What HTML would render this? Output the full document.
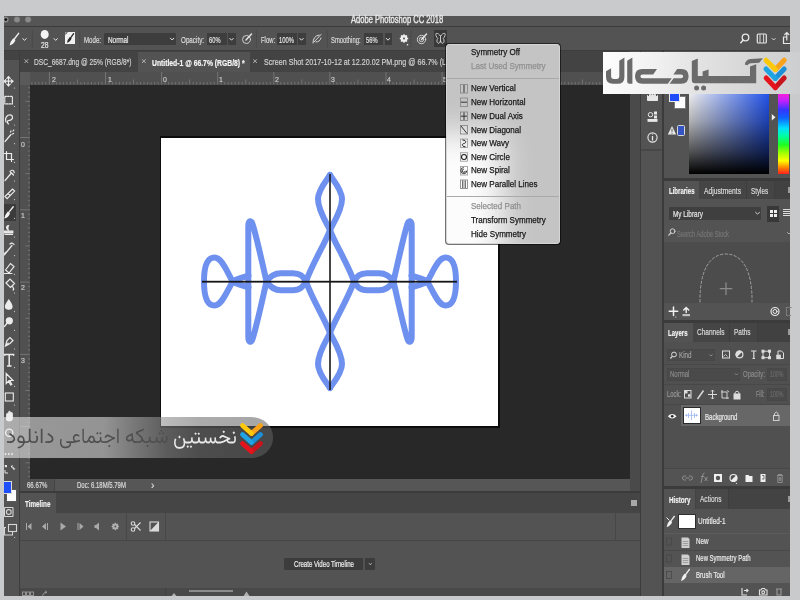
<!DOCTYPE html>
<html><head><meta charset="utf-8">
<style>
*{margin:0;padding:0;box-sizing:border-box}
html,body{width:800px;height:600px;overflow:hidden;background:#c9cacc;font-family:"Liberation Sans",sans-serif}
.a{position:absolute}
.t{position:absolute;white-space:nowrap;line-height:1;transform-origin:0 0}
svg{position:absolute;left:0;top:0;overflow:visible}
</style></head><body>
<!-- app frame -->
<div class="a" style="left:4px;top:16px;width:786px;height:580px;background:#535353"></div>
<!-- title bar -->
<div class="a" style="left:4px;top:16px;width:786px;height:10px;background:#555555"></div>
<div class="a" style="left:4px;top:26px;width:786px;height:1px;background:#3b3b3b"></div>
<svg width="40" height="14" style="left:4px;top:13px;overflow:hidden" viewBox="4 13 40 14">
<circle cx="5.6" cy="19.6" r="3.3" fill="#8c8c8c" stroke="#4a4a4a" stroke-width="0.5"/><circle cx="5.8" cy="19.6" r="1.4" fill="#111"/>
<circle cx="17" cy="19.6" r="3.3" fill="#8a8a8a" stroke="#4a4a4a" stroke-width="0.5"/>
<circle cx="28.1" cy="19.6" r="3.3" fill="#8a8a8a" stroke="#4a4a4a" stroke-width="0.5"/>
</svg>
<!-- options bar -->
<div class="a" style="left:4px;top:27px;width:786px;height:24px;background:#535353"></div>
<div class="a" style="left:4px;top:50px;width:786px;height:1px;background:#3d3d3d"></div>
<!-- tab bar -->
<div class="a" style="left:4px;top:51px;width:626px;height:20.5px;background:#434343"></div>
<div class="a" style="left:138px;top:52px;width:112px;height:19.5px;background:#535353"></div>
<!-- toolbar -->
<div class="a" style="left:4px;top:60px;width:15px;height:536px;background:#535353"></div>
<div class="a" style="left:4px;top:204px;width:12px;height:16.5px;background:#3b3b3b"></div>
<div class="a" style="left:19px;top:51px;width:1px;height:545px;background:#3d3d3d"></div>
<!-- rulers -->
<div class="a" style="left:20px;top:71.5px;width:610px;height:13.5px;background:#505050"></div>
<div class="a" style="left:20px;top:71.5px;width:10px;height:407.5px;background:#505050"></div>
<svg width="800" height="600"><path d="M31.87 82V84.5M35.37 82V84.5M38.88 82V84.5M42.39 82V84.5M45.89 82V84.5M49.40 72V84.5M52.91 82V84.5M56.41 82V84.5M59.92 82V84.5M63.42 82V84.5M66.93 82V84.5M70.44 82V84.5M73.94 82V84.5M77.45 79.5V84.5M80.96 82V84.5M84.46 82V84.5M87.97 82V84.5M91.47 82V84.5M94.98 82V84.5M98.49 82V84.5M101.99 82V84.5M105.50 72V84.5M109.01 82V84.5M112.51 82V84.5M116.02 82V84.5M119.52 82V84.5M123.03 82V84.5M126.54 82V84.5M130.04 82V84.5M133.55 79.5V84.5M137.06 82V84.5M140.56 82V84.5M144.07 82V84.5M147.57 82V84.5M151.08 82V84.5M154.59 82V84.5M158.09 82V84.5M161.60 72V84.5M165.11 82V84.5M168.61 82V84.5M172.12 82V84.5M175.62 82V84.5M179.13 82V84.5M182.64 82V84.5M186.14 82V84.5M189.65 79.5V84.5M193.16 82V84.5M196.66 82V84.5M200.17 82V84.5M203.68 82V84.5M207.18 82V84.5M210.69 82V84.5M214.19 82V84.5M217.70 72V84.5M221.21 82V84.5M224.71 82V84.5M228.22 82V84.5M231.72 82V84.5M235.23 82V84.5M238.74 82V84.5M242.24 82V84.5M245.75 79.5V84.5M249.26 82V84.5M252.76 82V84.5M256.27 82V84.5M259.77 82V84.5M263.28 82V84.5M266.79 82V84.5M270.29 82V84.5M273.80 72V84.5M277.31 82V84.5M280.81 82V84.5M284.32 82V84.5M287.82 82V84.5M291.33 82V84.5M294.84 82V84.5M298.34 82V84.5M301.85 79.5V84.5M305.36 82V84.5M308.86 82V84.5M312.37 82V84.5M315.88 82V84.5M319.38 82V84.5M322.89 82V84.5M326.39 82V84.5M329.90 72V84.5M333.41 82V84.5M336.91 82V84.5M340.42 82V84.5M343.93 82V84.5M347.43 82V84.5M350.94 82V84.5M354.44 82V84.5M357.95 79.5V84.5M361.46 82V84.5M364.96 82V84.5M368.47 82V84.5M371.98 82V84.5M375.48 82V84.5M378.99 82V84.5M382.49 82V84.5M386.00 72V84.5M389.51 82V84.5M393.01 82V84.5M396.52 82V84.5M400.02 82V84.5M403.53 82V84.5M407.04 82V84.5M410.54 82V84.5M414.05 79.5V84.5M417.56 82V84.5M421.06 82V84.5M424.57 82V84.5M428.08 82V84.5M431.58 82V84.5M435.09 82V84.5M438.59 82V84.5M442.10 72V84.5M445.61 82V84.5M449.11 82V84.5M452.62 82V84.5M456.12 82V84.5M459.63 82V84.5M463.14 82V84.5M466.64 82V84.5M470.15 79.5V84.5M473.66 82V84.5M477.16 82V84.5M480.67 82V84.5M484.17 82V84.5M487.68 82V84.5M491.19 82V84.5M494.69 82V84.5M498.20 72V84.5M501.71 82V84.5M505.21 82V84.5M508.72 82V84.5M512.23 82V84.5M515.73 82V84.5M519.24 82V84.5M522.74 82V84.5M526.25 79.5V84.5M529.76 82V84.5M533.26 82V84.5M536.77 82V84.5M540.27 82V84.5M543.78 82V84.5M547.29 82V84.5M550.79 82V84.5M554.30 72V84.5M557.81 82V84.5M561.31 82V84.5M564.82 82V84.5M568.33 82V84.5M571.83 82V84.5M575.34 82V84.5M578.84 82V84.5M582.35 79.5V84.5M585.86 82V84.5M589.36 82V84.5M592.87 82V84.5M596.38 82V84.5M599.88 82V84.5M603.39 82V84.5M606.89 82V84.5M610.40 72V84.5M613.91 82V84.5M617.41 82V84.5M620.92 82V84.5M624.42 82V84.5M627.93 82V84.5" stroke="#7a7a7a" stroke-width="0.85" fill="none"/><path d="M28 87.79H30M28 92.31H30M28 96.83H30M25.5 101.35H30M28 105.87H30M28 110.39H30M28 114.91H30M28 119.42H30M28 123.94H30M28 128.46H30M28 132.98H30M20 137.50H30M28 142.02H30M28 146.54H30M28 151.06H30M28 155.57H30M28 160.09H30M28 164.61H30M28 169.13H30M25.5 173.65H30M28 178.17H30M28 182.69H30M28 187.21H30M28 191.72H30M28 196.24H30M28 200.76H30M28 205.28H30M20 209.80H30M28 214.32H30M28 218.84H30M28 223.36H30M28 227.88H30M28 232.39H30M28 236.91H30M28 241.43H30M25.5 245.95H30M28 250.47H30M28 254.99H30M28 259.51H30M28 264.02H30M28 268.54H30M28 273.06H30M28 277.58H30M20 282.10H30M28 286.62H30M28 291.14H30M28 295.66H30M28 300.17H30M28 304.69H30M28 309.21H30M28 313.73H30M25.5 318.25H30M28 322.77H30M28 327.29H30M28 331.81H30M28 336.32H30M28 340.84H30M28 345.36H30M28 349.88H30M20 354.40H30M28 358.92H30M28 363.44H30M28 367.96H30M28 372.48H30M28 376.99H30M28 381.51H30M28 386.03H30M25.5 390.55H30M28 395.07H30M28 399.59H30M28 404.11H30M28 408.62H30M28 413.14H30M28 417.66H30M28 422.18H30M20 426.70H30M28 431.22H30M28 435.74H30M28 440.26H30M28 444.77H30M28 449.29H30M28 453.81H30M28 458.33H30M25.5 462.85H30M28 467.37H30M28 471.89H30M28 476.41H30" stroke="#7a7a7a" stroke-width="0.85" fill="none"/></svg>
<div class="a" style="left:20px;top:71.5px;width:10px;height:13.5px;background:#5a5a5a"></div>
<!-- pasteboard -->
<div class="a" style="left:30px;top:85px;width:600px;height:394px;background:#282828"></div>
<!-- canvas -->
<div class="a" style="left:159.5px;top:136px;width:340.5px;height:292px;background:#0c0c0c"></div>
<div class="a" style="left:161px;top:137.5px;width:337px;height:288.5px;background:#fff"></div>
<!-- symmetry shape -->
<svg width="800" height="600" viewBox="0 0 800 600">
<g fill="none" stroke="#6e90ef" stroke-width="6" stroke-linejoin="round" stroke-linecap="round">
<g id="half">
<path d="M330 230 C326 242 312 264 306 281.5 C312 299 326 321 330 333"/>
<path d="M330 230 C326 222 318 210 318 199 C318 190 326 181 330 175"/>
<path d="M330 333 C326 341 318 353 318 364 C318 373 326 382 330 388"/>
<path d="M306 281.5 C303 276 300 273.3 293 273.3 L281 273.3 C274 273.3 269.5 277 266.5 281.5 C269.5 286 274 290.2 281 290.2 L293 290.2 C300 290.2 303 287 306 281.5"/>
<path d="M266.5 281.5 C262 262 256 234 252.5 224 C251.5 220 248.3 220 248.3 226 L248.3 337 C248.3 343 251.5 343 252.5 339 C256 329 262 301 266.5 281.5"/>
<path d="M248.5 275.5 C244 277 237 279 232.5 281 C227 272 222 257.5 214.5 257.5 C206.5 257.5 204 269 204 281.5 C204 294 206.5 305.5 214.5 305.5 C222 305.5 227 291 232.5 282 C237 284 244 286 248.5 287.5"/>
</g>
<use href="#half" transform="translate(660 0) scale(-1 1)"/>
</g>
<rect x="202" y="280.8" width="255" height="1.8" fill="#151515"/>
<rect x="329.2" y="174" width="1.6" height="216" fill="#1a1a1a"/>
</svg>
<!-- status bar -->
<div class="a" style="left:20px;top:479px;width:620px;height:12px;background:#505050"></div>
<div class="a" style="left:54px;top:479px;width:576px;height:12px;background:#565656"></div>
<div class="a" style="left:53.5px;top:479px;width:1px;height:12px;background:#444"></div>
<div class="a" style="left:20px;top:491px;width:620px;height:1.5px;background:#3b3b3b"></div>
<!-- scroll strip -->
<div class="a" style="left:630px;top:71.5px;width:10px;height:419.5px;background:#4a4a4a"></div>
<div class="a" style="left:640px;top:51px;width:1px;height:545px;background:#3b3b3b"></div>
<!-- icon column -->
<div class="a" style="left:641px;top:51px;width:21px;height:545px;background:#535353"></div>
<div class="a" style="left:641px;top:149px;width:21px;height:2px;background:#474747"></div>
<div class="a" style="left:662px;top:51px;width:2px;height:545px;background:#3b3b3b"></div>
<!-- timeline panel -->
<div class="a" style="left:20px;top:492.5px;width:620px;height:103.5px;background:#535353"></div>
<div class="a" style="left:20px;top:492.5px;width:620px;height:20.5px;background:#454545"></div>
<div class="a" style="left:20px;top:493px;width:36px;height:20px;background:#535353"></div>
<div class="a" style="left:20px;top:539.5px;width:620px;height:1px;background:#464646"></div>
<div class="a" style="left:125.5px;top:513px;width:1px;height:26.5px;background:#474747"></div>
<div class="a" style="left:165px;top:513px;width:1px;height:26.5px;background:#474747"></div>
<div class="a" style="left:615px;top:513px;width:1px;height:26.5px;background:#474747"></div>
<div class="a" style="left:20px;top:588px;width:620px;height:8px;background:#494949"></div>
<div class="a" style="left:631px;top:500px;width:5.5px;height:5.5px;background:#a8a8a8"></div>
<div class="a" style="left:284px;top:558px;width:79px;height:12px;background:#3c3c3c;border-radius:1px"></div>
<div class="a" style="left:365px;top:558px;width:10px;height:12px;background:#3c3c3c;border-radius:1px"></div>
<!-- right panels -->
<div class="a" style="left:664px;top:51px;width:126px;height:545px;background:#535353"></div>
<div class="a" style="left:664px;top:178px;width:126px;height:2.5px;background:#3b3b3b"></div>
<div class="a" style="left:664px;top:180.5px;width:126px;height:18.5px;background:#454545"></div>
<div class="a" style="left:664px;top:180.5px;width:35px;height:18.5px;background:#535353"></div>
<div class="a" style="left:664px;top:242px;width:126px;height:60.5px;background:#4c4c4c"></div>
<div class="a" style="left:664px;top:320px;width:126px;height:2.5px;background:#3b3b3b"></div>
<div class="a" style="left:664px;top:322.5px;width:126px;height:19.5px;background:#454545"></div>
<div class="a" style="left:664px;top:322.5px;width:29px;height:19.5px;background:#535353"></div>
<div class="a" style="left:664px;top:342px;width:126px;height:126px;background:#505050"></div>
<div class="a" style="left:664px;top:364px;width:126px;height:1px;background:#484848"></div>
<div class="a" style="left:664px;top:383.5px;width:126px;height:1px;background:#484848"></div>
<div class="a" style="left:664px;top:404px;width:126px;height:1px;background:#484848"></div>
<div class="a" style="left:681px;top:405px;width:109px;height:21px;background:#676767"></div>
<div class="a" style="left:664px;top:468px;width:126px;height:1px;background:#474747"></div>
<div class="a" style="left:664px;top:485.5px;width:126px;height:3.5px;background:#3b3b3b"></div>
<div class="a" style="left:664px;top:489px;width:126px;height:19.5px;background:#434343"></div>
<div class="a" style="left:664px;top:489px;width:31px;height:19.5px;background:#535353"></div>
<div class="a" style="left:695.5px;top:489px;width:32px;height:19.5px;background:#484848"></div>
<div class="a" style="left:664px;top:533px;width:126px;height:1px;background:#5c5c5c"></div>
<div class="a" style="left:664px;top:550px;width:126px;height:1px;background:#484848"></div>
<div class="a" style="left:664px;top:567px;width:126px;height:16px;background:#656565"></div>
<div class="a" style="left:746px;top:180.5px;width:1px;height:18.5px;background:#3e3e3e"></div>
<div class="a" style="left:774px;top:180.5px;width:1px;height:18.5px;background:#3e3e3e"></div>
<div class="a" style="left:775px;top:180.5px;width:15px;height:18.5px;background:#414141"></div>
<div class="a" style="left:729px;top:322.5px;width:1px;height:19.5px;background:#3e3e3e"></div>
<div class="a" style="left:756.5px;top:322.5px;width:1px;height:19.5px;background:#3e3e3e"></div>
<div class="a" style="left:757.5px;top:322.5px;width:32.5px;height:19.5px;background:#414141"></div>
<div class="a" style="left:727.5px;top:489px;width:1px;height:19.5px;background:#3e3e3e"></div>
<div class="a" style="left:788px;top:187px;width:2px;height:6px;background:#9a9a9a"></div>
<div class="a" style="left:788px;top:329px;width:2px;height:6px;background:#9a9a9a"></div>
<div class="a" style="left:788px;top:496px;width:2px;height:6px;background:#9a9a9a"></div>
<!-- options bar widgets -->
<div class="a" style="left:104px;top:32.5px;width:72px;height:12.5px;background:#3d3d3d;border-radius:1.5px"></div>
<div class="a" style="left:207px;top:33px;width:20px;height:12px;background:#3d3d3d"></div>
<div class="a" style="left:228px;top:33px;width:7.5px;height:12px;background:#3d3d3d"></div>
<div class="a" style="left:277px;top:33px;width:20px;height:12px;background:#3d3d3d"></div>
<div class="a" style="left:298px;top:33px;width:7.5px;height:12px;background:#3d3d3d"></div>
<div class="a" style="left:364px;top:33px;width:19px;height:12px;background:#3d3d3d"></div>
<div class="a" style="left:384.5px;top:33px;width:7px;height:12px;background:#3d3d3d"></div>
<div class="a" style="left:65.3px;top:32.2px;width:9.7px;height:11.7px;background:#f0f0f0"></div>
<svg width="800" height="600">
<g fill="none" stroke="#4a4a4a" stroke-width="1">
<path d="M32.3 30 V48 M79.8 30 V48 M256.4 30 V48 M327.3 30 V48 M411 30 V48"/>
</g>
<g fill="none" stroke="#e8e8e8" stroke-width="1" stroke-linecap="round">
<path d="M22.8 38.6 L24.5 40.4 L26.2 38.6 M54 38.6 L55.7 40.4 L57.4 38.6 M170.5 38.2 L172.2 40 L173.9 38.2 M229.8 38.4 L231.5 40.2 L233.2 38.4 M299.8 38.4 L301.5 40.2 L303.2 38.4 M386.3 38.4 L388 40.2 L389.7 38.4"/>
<path d="M18.6 33.4 L14.2 39.2" stroke-width="1.5"/>
<path d="M13.2 38.2 L15.4 40.2 Q13.6 44.6 9.6 45.4 Q10.2 41.4 13.2 38.2 Z" fill="#f2f2f2" stroke="none"/>
<circle cx="246.5" cy="39.5" r="4" stroke="#cfcfcf"/><path d="M246 40 L251.5 34" stroke-width="1.4"/>
<path d="M313 43 Q313 36 319 35 M314 42 L321 34.5 M316 42 Q320 42 321 38" stroke="#d8d8d8"/>
<circle cx="421.5" cy="39.5" r="4.2" stroke="#cfcfcf"/><circle cx="421.5" cy="39.5" r="2.2" stroke="#cfcfcf"/><path d="M421.5 39.5 L426.5 34" stroke-width="1.4"/>
<circle cx="745.5" cy="37.5" r="3.3" stroke-width="1.3"/><path d="M743.2 40 L740.8 42.8" stroke-width="1.5"/>
<rect x="757.3" y="34" width="9" height="9" rx="1" stroke-width="1.2"/><path d="M760 34.5 V42.5 M763.6 34.5 V42.5" stroke-width="0.9"/>
<path d="M772.2 38.5 L773.7 40 L775.2 38.5" stroke-width="0.9"/>
<path d="M786 37 H783.5 V43.5 H790 M786.8 40 V32.5 M784.8 34.5 L786.8 32.5 L788.8 34.5" stroke-width="1.2"/>
</g>
<ellipse cx="44.7" cy="34.4" rx="4" ry="4.5" fill="#f4f4f4"/>
<path d="M73.6 33.6 L70.6 37.8" stroke="#2a2a2a" stroke-width="1.3" stroke-linecap="round"/><path d="M69.8 37 L71.6 38.6 Q70.2 42.2 67 42.8 Q67.4 39.6 69.8 37 Z" fill="#2a2a2a"/>
<path d="M65.3 32.2 L68 32.2 L65.3 35 Z" fill="#535353"/>
<g transform="translate(404 38.5)"><circle r="2.6" fill="none" stroke="#efefef" stroke-width="1.6"/><path d="M0 -4.2V4.2M-4.2 0H4.2M-3 -3L3 3M3 -3L-3 3" stroke="#efefef" stroke-width="1.4"/><circle r="1" fill="#535353"/></g>
<circle cx="407.5" cy="44.8" r="0.8" fill="#eee"/>
</svg>
<!-- tab close marks -->
<svg width="800" height="600"><g stroke="#bdbdbd" stroke-width="0.9"><path d="M24.5 59.3 L28.2 63 M28.2 59.3 L24.5 63 M142 59.3 L145.7 63 M145.7 59.3 L142 63 M253.2 59.3 L256.9 63 M256.9 59.3 L253.2 63"/></g></svg>
<!-- toolbar icons -->
<svg width="800" height="600">
<g fill="none" stroke="#ececec" stroke-width="1.2" stroke-linecap="round">
<path d="M8.5 76.5 V86 M4 81.2 H13 M6.8 78.3 L8.5 76.5 L10.2 78.3 M6.8 84.2 L8.5 86 L10.2 84.2 M5.8 79.6 L4 81.2 L5.8 82.9 M11.2 79.6 L13 81.2 L11.2 82.9"/>
<rect x="4.8" y="96.3" width="7.6" height="7.6" stroke-dasharray="1.6 1.2"/>
<path d="M6 122 Q4.5 118 8 115.3 Q12 114 12.5 117 Q12.8 120 8.8 120.5 M8 120.5 Q6.5 122.5 8.5 124"/>
<path d="M5 141.5 L11 134.5 M10.5 132 L11 131 M12.5 134 L13.5 133.5 M13 131 L13.8 130"/>
<path d="M6.5 151.5 V159.5 H13.5 M4.5 153.5 H11.5 V161.5"/>
<path d="M5 180.5 L11 173.5 M10 171.5 L13.5 175 M11 170.5 Q13.8 169.5 14.2 172.6"/>
<path d="M5 196.5 L12.5 189 L14.6 191.1 L7.1 198.6 Z M8 193.5 L10.2 195.7"/>
<path d="M13.2 206.8 L8.8 212.4" stroke-width="1.4"/><path d="M7.8 211.4 L10 213.4 Q8.2 217.8 4.3 218.6 Q4.9 214.6 7.8 211.4 Z" fill="#f2f2f2" stroke="none"/>
<path d="M8.8 225.5 Q6.6 225.5 6.6 227.5 Q6.6 229 8.2 229.8 V231 M4.6 233 H12.8 V231.2 H4.6 Z M5 234.5 H12.5" fill="#ececec"/>
<path d="M5 254 L12 245.5 M5.8 252.2 Q4.2 253 4.5 255 M10 244 Q12 242 14 244.5"/>
<path d="M5.5 270 L10.5 263.5 L14 266.5 L9 273 Z M4.5 273.5 H12" fill="none"/>
<path d="M6 283 L10 279 L14.5 283.5 L10.5 287.5 Z M12.6 286.7 Q14.2 288.8 13.2 290" />
<path d="M8.8 300 Q5.5 304.5 5.5 306.5 Q5.5 309.2 8.8 309.2 Q12 309.2 12 306.5 Q12 304.5 8.8 300 Z" fill="#ececec"/>
<circle cx="9.3" cy="320.8" r="3" fill="#ececec"/><path d="M7.2 323 L4.6 326.4" stroke-width="1.4"/>
<path d="M5.5 346 L7 340.5 L10 337.5 L13 340.5 L10 343.5 Z M5.5 346 L8.2 343.2"/>
<path d="M4.8 355.2 V354.4 H13.6 V355.2 M9.2 354.4 V366 M7.5 366 H11" stroke-width="1.5"/>
<path d="M6.2 373.5 L6.2 383.5 L8.6 381 L10.6 385 L11.8 384.4 L9.8 380.5 L13 380.5 Z" fill="none"/>
<rect x="5.3" y="393" width="8" height="8" stroke-width="1.1"/>
<path d="M6.5 419.5 V414.5 Q6.5 413.3 7.5 413.3 Q8.5 413.3 8.5 414.5 V412.5 Q8.5 411.3 9.5 411.3 Q10.5 411.3 10.5 412.5 V413.5 Q10.5 412.5 11.5 412.5 Q12.5 412.5 12.5 413.5 V418 Q12.5 421 10 421 H8.5 Q6.5 421 6.5 419.5 Z" fill="#ececec" stroke-width="0.8"/>
<circle cx="9.2" cy="432.8" r="3.6" stroke-width="1.3"/><path d="M11.8 435.5 L14.5 438.3" stroke-width="1.6"/>
</g>
<g fill="#ececec"><circle cx="5.5" cy="454" r="0.9"/><circle cx="8.8" cy="454" r="0.9"/><circle cx="12.1" cy="454" r="0.9"/></g>
<g fill="#cfcfcf">
<circle cx="14.5" cy="88" r="0.6"/><circle cx="14.5" cy="106.5" r="0.6"/><circle cx="14.5" cy="125" r="0.6"/><circle cx="14.5" cy="143.7" r="0.6"/><circle cx="14.5" cy="162.4" r="0.6"/><circle cx="14.5" cy="181" r="0.6"/><circle cx="14.5" cy="199.6" r="0.6"/><circle cx="14.5" cy="218.3" r="0.6"/><circle cx="14.5" cy="237" r="0.6"/><circle cx="14.5" cy="255.6" r="0.6"/><circle cx="14.5" cy="274.3" r="0.6"/><circle cx="14.5" cy="293" r="0.6"/><circle cx="14.5" cy="311.6" r="0.6"/><circle cx="14.5" cy="330.3" r="0.6"/><circle cx="14.5" cy="349" r="0.6"/><circle cx="14.5" cy="367.6" r="0.6"/><circle cx="14.5" cy="386.3" r="0.6"/><circle cx="14.5" cy="405" r="0.6"/><circle cx="14.5" cy="441.5" r="0.6"/>
</g>
<g fill="none" stroke="#e6e6e6" stroke-width="1">
<path d="M5 470 V473 H8 M11 466.5 Q14 466.5 14 469.5 M12.5 465.5 L11 466.5 L12.5 467.8 M14.8 468.3 L14 469.5 L13 468.3"/>
<rect x="4.8" y="465" width="2.2" height="2.2" fill="#e6e6e6" stroke="none"/>
</g>
</svg>
<div class="a" style="left:6px;top:488.5px;width:11px;height:13px;background:#fdfdfd;border:1px solid #5a5a5a"></div>
<div class="a" style="left:4px;top:480.5px;width:7.5px;height:13.5px;background:#1f4ff9;border:1px solid #dcdcdc;border-left:none"></div>
<svg width="800" height="600">
<g fill="none" stroke="#d6d6d6" stroke-width="1.1">
<rect x="4.5" y="507.5" width="8.5" height="9" rx="0.5"/><circle cx="8.8" cy="512" r="2.4"/>
<rect x="8.5" y="524.5" width="8" height="7"/><path d="M6 527.5 H4.5 V535 H12.5 V532"/>
</g>
<circle cx="14.6" cy="537.5" r="0.6" fill="#cfcfcf"/>
</svg>
<!-- timeline controls -->
<svg width="800" height="600">
<g fill="#a9a9a9">
<rect x="26" y="523" width="1" height="7"/><path d="M31.5 523 V530 L27.5 526.5 Z"/>
<rect x="47" y="523" width="1" height="7"/><path d="M46 523 V530 L42 526.5 Z"/>
<path d="M60.5 522.5 V530.5 L66 526.5 Z"/>
<rect x="77.5" y="523" width="1" height="7"/><path d="M79.5 523 V530 L83.5 526.5 Z"/>
<path d="M94.5 525 H96 L99 522.5 V530.5 L96 528 H94.5 Z"/>
</g>
<g transform="translate(115.3 526.5)"><circle r="2.3" fill="none" stroke="#b0b0b0" stroke-width="1.5"/><path d="M0 -3.8V3.8M-3.8 0H3.8M-2.7 -2.7L2.7 2.7M2.7 -2.7L-2.7 2.7" stroke="#b0b0b0" stroke-width="1.2"/><circle r="0.9" fill="#535353"/></g>
<g fill="none" stroke="#dadada" stroke-width="1.1">
<circle cx="133" cy="529.5" r="1.8"/><circle cx="133" cy="523.5" r="1.8"/><path d="M134.6 528.5 L140.5 522.5 M134.6 524.5 L140.5 530.5"/>
<rect x="150" y="522" width="8.5" height="9"/>
</g>
<path d="M158.5 522 V531 H150 Z" fill="#dadada"/>
<path d="M369 563.3 L370.3 564.6 L371.6 563.3" stroke="#ddd" stroke-width="0.9" fill="none"/>
</svg>
<!-- timeline bottom row -->
<div class="a" style="left:165px;top:588px;width:1px;height:8px;background:#414141"></div>
<div class="a" style="left:188.5px;top:590px;width:44px;height:1.5px;background:#8a8a8a"></div>
<svg width="800" height="600">
<g fill="none" stroke="#9a9a9a" stroke-width="0.9"><rect x="22.5" y="592" width="3" height="3.5"/><rect x="26.5" y="592" width="3" height="3.5"/><rect x="30.5" y="592" width="3" height="3.5"/>
<path d="M42.5 596 Q43 592.5 46.5 592 M45 590.8 L46.8 592 L45.5 593.6"/></g>
<path d="M171.5 596 L174 593 L176.5 596 Z" fill="#b0b0b0"/>
<path d="M243.5 596 L246.5 591.5 L249.5 596 Z" fill="#b0b0b0"/>
</svg>
<!-- right icon column -->
<svg width="800" height="600">
<g fill="none" stroke="#e8e8e8" stroke-width="1">
<path d="M647.5 100.5 H657.5 V95.5 L656 97 L655 94 L653.8 96.5 L652.5 93.5 L651.2 96.5 L650 94 L649 97 L647.5 95.5 Z" fill="#e8e8e8"/>
<circle cx="650.5" cy="114.7" r="2.2"/><rect x="654.5" y="112" width="2" height="2" fill="#e8e8e8"/><rect x="654.5" y="116" width="2" height="2" fill="#e8e8e8"/><rect x="648" y="119.5" width="9" height="1.8" fill="#e8e8e8"/>
<circle cx="652.5" cy="137.5" r="4.6" stroke-width="1.1"/><path d="M652.5 136 V140.5 M652.5 134.5 V135" stroke-width="1.3"/>
</g>
</svg>
<!-- color panel contents -->
<div class="a" style="left:674px;top:96px;width:12px;height:12.5px;background:#fff;border:1px solid #7a7a7a"></div>
<div class="a" style="left:669px;top:92px;width:11px;height:9.5px;background:#1f4dfb;border:1px solid #e8e8e8"></div>
<svg width="800" height="600"><path d="M672 126 L676.2 134.5 L667.8 134.5 Z" fill="#e8e8e8"/><rect x="671.5" y="128.8" width="1" height="3" fill="#555"/><rect x="671.5" y="132.7" width="1" height="1" fill="#555"/></svg>
<div class="a" style="left:676.5px;top:125px;width:8.5px;height:10.5px;background:#3554c4;border:1.2px solid #d8d8d8;border-radius:1.5px"></div>
<div class="a" style="left:689px;top:86px;width:80px;height:87.5px;background:linear-gradient(to bottom,rgba(0,0,0,0) 0%,rgba(0,0,0,.3) 40%,rgba(0,0,0,.68) 75%,#000 100%),linear-gradient(to right,#fff,#2558f8)"></div>
<div class="a" style="left:778px;top:86px;width:11px;height:87.5px;background:linear-gradient(to bottom,#ff2090 0%,#ff20d8 8%,#c020ff 17%,#3535ff 27%,#1060ff 36%,#00e0ff 48%,#00ffa0 57%,#20ff20 67%,#a0ff00 76%,#ffff00 85%,#ff8000 93%,#ff2020 100%)"></div>
<svg width="800" height="600"><path d="M771.5 113.5 L775.8 117.3 L771.5 121.1 Z" fill="#f2f2f2" stroke="#333" stroke-width="0.4"/></svg>
<!-- libraries contents -->
<div class="a" style="left:669px;top:207px;width:92px;height:12.5px;background:#3f3f3f;border-radius:1px"></div>
<div class="a" style="left:767px;top:205.5px;width:12px;height:16px;background:#383838"></div>
<div class="a" style="left:769.5px;top:209.5px;width:3px;height:3px;background:#eee"></div><div class="a" style="left:773.5px;top:209.5px;width:3px;height:3px;background:#eee"></div>
<div class="a" style="left:769.5px;top:213.5px;width:3px;height:3px;background:#eee"></div><div class="a" style="left:773.5px;top:213.5px;width:3px;height:3px;background:#eee"></div>
<div class="a" style="left:782.5px;top:209px;width:7.5px;height:1px;background:#ddd;box-shadow:0 2px 0 #ddd,0 4px 0 #ddd,0 6px 0 #ddd"></div>
<svg width="800" height="600">
<g fill="none" stroke-linecap="round">
<circle cx="672.6" cy="231.2" r="2.4" stroke="#d0d0d0" stroke-width="1"/><path d="M670.8 233 L668.8 235.2" stroke="#d0d0d0" stroke-width="1.2"/>
<path d="M787.5 232.5 L789 234 L790.5 232.5" stroke="#bdbdbd" stroke-width="0.9"/>
<path d="M700 302 C699.5 270 710 254 726 254 C742 254 752.5 270 752 302" stroke="#a0a0a0" stroke-width="1" stroke-dasharray="2.4 2.2"/>
<path d="M726 283 V294.5 M720.3 288.7 H731.7" stroke="#8a8a8a" stroke-width="1.3"/>
<path d="M755.5 212.2 L757.5 214.2 L759.5 212.2" stroke="#cfcfcf" stroke-width="1"/>
<path d="M673.5 307 V315.5 M669.2 311.2 H677.7" stroke="#f2f2f2" stroke-width="1.5"/>
<path d="M686.2 307.5 V312.5 M683.7 310 L686.2 307.5 L688.7 310" stroke="#f2f2f2" stroke-width="1.4"/>
<circle cx="675.8" cy="317" r="0.6" fill="#eee" stroke="none"/>
<circle cx="775" cy="311.5" r="4" stroke="#eaeaea" stroke-width="1.2"/><circle cx="775" cy="311.5" r="2" stroke="#eaeaea" stroke-width="1"/>
<path d="M786 307.5 H791 M786.5 308.5 V315.5 H790.5" stroke="#7a7a7a" stroke-width="1.2"/>
</g>
<rect x="682.5" y="314" width="7.5" height="2.2" fill="#bdbdbd"/>
</svg>
<!-- layers contents -->
<div class="a" style="left:666.5px;top:349px;width:48.5px;height:12px;background:#4a4a4a;border:1px solid #474747"></div>
<div class="a" style="left:666.5px;top:368px;width:73.5px;height:12.5px;background:#4a4a4a;border:1px solid #474747"></div>
<div class="a" style="left:767px;top:368px;width:19.5px;height:12.5px;background:#4a4a4a;border:1px solid #474747"></div>
<div class="a" style="left:767px;top:388px;width:19.5px;height:12.5px;background:#4a4a4a;border:1px solid #474747"></div>
<div class="a" style="left:682.5px;top:407px;width:18px;height:16.5px;background:#fff;border:1px solid #2a2a2a"></div>
<svg width="800" height="600">
<g fill="none" stroke="#9bb2f0" stroke-width="0.8">
<path d="M691.5 410.5 V420 M685 415.3 H698 M688.5 413 V418 M694.5 413 V418 M686.5 414 V416.5 M696.5 414 V416.5"/>
</g>
<g fill="none" stroke="#dcdcdc" stroke-width="1">
<circle cx="674" cy="354.5" r="2.4"/><path d="M672.3 356.3 L670.4 358.5" stroke-width="1.2"/>
<path d="M709.5 354.5 L711 356 L712.5 354.5 M735 373.5 L736.5 375 L738 373.5" stroke="#8a8a8a"/>
<rect x="722.5" y="351" width="7" height="7"/><path d="M723.5 356.5 L725.5 354.5 L727.5 356.5" stroke-width="0.8"/>
<circle cx="739.5" cy="354.5" r="3.4" stroke-width="1.2"/><path d="M737 357 A3.4 3.4 0 0 1 742 352" fill="#dcdcdc"/>
<path d="M751 351 H756.5 M753.8 351 V358.5 M752.5 358.5 H755" stroke-width="1.2"/>
<rect x="763" y="351.2" width="6.5" height="6.5"/><rect x="762" y="350.2" width="2" height="2" fill="#dcdcdc"/><rect x="768.5" y="350.2" width="2" height="2" fill="#dcdcdc"/><rect x="762" y="356.7" width="2" height="2" fill="#dcdcdc"/><rect x="768.5" y="356.7" width="2" height="2" fill="#dcdcdc"/>
<path d="M778 358.5 V351 H781.5 L783.5 353 V358.5 Z"/><rect x="776.8" y="355.2" width="3.5" height="3.5" fill="#dcdcdc"/>
<rect x="684.5" y="390.5" width="6.5" height="7.5"/><rect x="685" y="391" width="2.5" height="2.5" fill="#dcdcdc" stroke="none"/><rect x="688" y="394.2" width="2.5" height="2.5" fill="#dcdcdc" stroke="none"/>
<path d="M697.5 399 L703.5 390.5" stroke-width="1.4"/>
<path d="M712.5 390 V399 M708 394.5 H717 M711 391.5 L712.5 390 L714 391.5 M711 397.5 L712.5 399 L714 397.5"/>
<path d="M722 390 V398 H729 M721 392 H727 V399 M727 390.5 L729 392" stroke-width="0.9"/>
<rect x="734" y="394" width="6" height="5" fill="#dcdcdc"/><path d="M735 394 V392.5 Q737 389.5 739 392.5 V394"/>
<path d="M667.8 416.2 Q672.2 411.8 676.6 416.2 Q672.2 420.6 667.8 416.2 Z" fill="#f4f4f4" stroke="none"/><circle cx="672.2" cy="416.2" r="1.3" fill="#222" stroke="none"/>
<rect x="773.5" y="415.5" width="5.5" height="5" stroke="#d0d0d0"/><path d="M774.5 415.5 V413.5 Q776.2 410.5 778 413.5 V415.5" stroke="#d0d0d0"/>
</g>
<g fill="none" stroke="#8e8e8e" stroke-width="1">
<path d="M686 476 H684.5 A2 2 0 0 0 684.5 480 H686 M689 476 H690.5 A2 2 0 0 1 690.5 480 H689 M685.5 478 H689.5"/>
<path d="M704.5 473 Q703 473 702.5 476 L701 483 M701 476.5 H704 M704.5 477 L707.5 481 M707.5 477 L704.5 481"/>
<path d="M778 474.5 H782 M777 475.5 H783 M777.8 475.5 V482.5 H782.2 V475.5 M779.3 477 V481 M780.7 477 V481"/>
</g>
<rect x="714" y="474" width="8" height="8" fill="#f0f0f0"/><circle cx="718" cy="478" r="2.2" fill="#535353"/>
<circle cx="733.5" cy="478" r="3.5" fill="none" stroke="#f0f0f0" stroke-width="1.1"/><path d="M731 480.5 A3.5 3.5 0 0 0 736 475.5 Z" fill="#f0f0f0"/>
<circle cx="736.5" cy="483.3" r="0.6" fill="#eee"/>
<path d="M745.5 475 H748.5 L749.5 476 H752.5 V482 H745.5 Z" fill="#f0f0f0"/>
<path d="M760.5 474 H765.5 V482 H760.5 Z" fill="#f0f0f0"/><path d="M762 475.5 H764 V479 H762" fill="none" stroke="#535353" stroke-width="0.8"/>
</svg>
<!-- history contents -->
<div class="a" style="left:677.5px;top:513.5px;width:18px;height:15.5px;background:#fff;border:1px solid #2f2f2f"></div>
<svg width="800" height="600">
<g fill="none" stroke="#ececec" stroke-width="1.2">
<path d="M674.6 516 L671 520.8" stroke-width="1.3"/><path d="M670 520 L672.2 522 Q670.4 526.2 666.6 527 Q667.2 523 670 520 Z" fill="#f2f2f2" stroke="none"/>
<path d="M666.5 517.5 L669 520" stroke-width="1"/>
</g>
<g fill="none" stroke="#484848" stroke-width="0.8">
<rect x="666.5" y="538" width="5" height="7"/><rect x="666.5" y="555" width="5" height="7"/><rect x="666.5" y="571.5" width="5" height="7"/>
</g>
<g fill="#cfcfcf"><path d="M681.5 537.5 H688 L689.5 539 V548 H681.5 Z"/><path d="M681.5 554.5 H688 L689.5 556 V565 H681.5 Z"/></g>
<g stroke="#8a8a8a" stroke-width="0.7"><path d="M682.8 541.5 H688.2 M682.8 543.5 H688.2 M682.8 545.5 H688.2 M682.8 558.5 H688.2 M682.8 560.5 H688.2 M682.8 562.5 H688.2"/></g>
<path d="M689.4 569.4 L685.4 574.8" stroke="#f0f0f0" stroke-width="1.4" stroke-linecap="round"/><path d="M684.4 573.8 L686.6 575.8 Q684.8 580.2 681 581 Q681.6 577 684.4 573.8 Z" fill="#f2f2f2"/>
<g fill="none" stroke="#e2e2e2" stroke-width="1.1">
<path d="M742 588 V595 H747 M744 590.5 H748 M746.5 589 L748 590.5 L746.5 592"/>
<path d="M759.5 590 H761 L762 588.5 H764.5 L765.5 590 H767 V595 H759.5 Z"/><circle cx="763.2" cy="592.3" r="1.4"/>
<path d="M776 589 H782 M777 589.5 V595 H781 V589.5" stroke="#9a9a9a"/>
</g>
</svg>

<div class="t" style="left:351.20px;top:14.82px;font-size:10.06px;color:#e8e8e8;font-weight:normal;transform:scaleX(0.753);-webkit-text-stroke:0.2px #e8e8e8;-webkit-text-stroke:0.4px #e8e8e8;">Adobe Photoshop CC 2018</div>
<div class="t" style="left:41.00px;top:41.30px;font-size:8.42px;color:#e6e6e6;font-weight:normal;transform:scaleX(0.802);-webkit-text-stroke:0.2px #e6e6e6;">28</div>
<div class="t" style="left:84.00px;top:34.67px;font-size:9.59px;color:#dcdcdc;font-weight:normal;transform:scaleX(0.639);-webkit-text-stroke:0.2px #dcdcdc;">Mode:</div>
<div class="t" style="left:108.00px;top:34.67px;font-size:9.59px;color:#ececec;font-weight:normal;transform:scaleX(0.664);-webkit-text-stroke:0.2px #ececec;">Normal</div>
<div class="t" style="left:181.00px;top:34.67px;font-size:9.59px;color:#dcdcdc;font-weight:normal;transform:scaleX(0.655);-webkit-text-stroke:0.2px #dcdcdc;">Opacity:</div>
<div class="t" style="left:209.00px;top:34.67px;font-size:9.59px;color:#e6e6e6;font-weight:normal;transform:scaleX(0.600);-webkit-text-stroke:0.2px #e6e6e6;">60%</div>
<div class="t" style="left:261.00px;top:34.67px;font-size:9.59px;color:#dcdcdc;font-weight:normal;transform:scaleX(0.612);-webkit-text-stroke:0.2px #dcdcdc;">Flow:</div>
<div class="t" style="left:278.50px;top:34.67px;font-size:9.59px;color:#e6e6e6;font-weight:normal;transform:scaleX(0.612);-webkit-text-stroke:0.2px #e6e6e6;">100%</div>
<div class="t" style="left:330.50px;top:34.67px;font-size:9.59px;color:#dcdcdc;font-weight:normal;transform:scaleX(0.609);-webkit-text-stroke:0.2px #dcdcdc;">Smoothing:</div>
<div class="t" style="left:365.50px;top:34.67px;font-size:9.59px;color:#e6e6e6;font-weight:normal;transform:scaleX(0.600);-webkit-text-stroke:0.2px #e6e6e6;">56%</div>
<div class="t" style="left:34.20px;top:57.49px;font-size:9.96px;color:#d2d2d2;font-weight:normal;transform:scaleX(0.664);-webkit-text-stroke:0.2px #d2d2d2;">DSC_6687.dng @ 25% (RGB/8*)</div>
<div class="t" style="left:152.00px;top:57.92px;font-size:9.46px;color:#f6f6f6;font-weight:bold;transform:scaleX(0.718);-webkit-text-stroke:0.2px #f6f6f6;">Untitled-1 @ 66.7% (RGB/8) *</div>
<div class="t" style="left:263.80px;top:57.49px;font-size:9.96px;color:#d2d2d2;font-weight:normal;transform:scaleX(0.718);-webkit-text-stroke:0.2px #d2d2d2;">Screen Shot 2017-10-12 at 12.20.02 PM.png @ 66.7% (La</div>
<div class="t" style="left:51.50px;top:75.77px;font-size:7.72px;color:#c8c8c8;font-weight:normal;transform:scaleX(0.900);-webkit-text-stroke:0.2px #c8c8c8;">2</div>
<div class="t" style="left:107.50px;top:75.77px;font-size:7.72px;color:#c8c8c8;font-weight:normal;transform:scaleX(0.900);-webkit-text-stroke:0.2px #c8c8c8;">1</div>
<div class="t" style="left:162.60px;top:75.77px;font-size:7.72px;color:#c8c8c8;font-weight:normal;transform:scaleX(0.900);-webkit-text-stroke:0.2px #c8c8c8;">0</div>
<div class="t" style="left:218.80px;top:75.77px;font-size:7.72px;color:#c8c8c8;font-weight:normal;transform:scaleX(0.900);-webkit-text-stroke:0.2px #c8c8c8;">1</div>
<div class="t" style="left:274.90px;top:75.77px;font-size:7.72px;color:#c8c8c8;font-weight:normal;transform:scaleX(0.900);-webkit-text-stroke:0.2px #c8c8c8;">2</div>
<div class="t" style="left:331.00px;top:75.77px;font-size:7.72px;color:#c8c8c8;font-weight:normal;transform:scaleX(0.900);-webkit-text-stroke:0.2px #c8c8c8;">3</div>
<div class="t" style="left:387.00px;top:75.77px;font-size:7.72px;color:#c8c8c8;font-weight:normal;transform:scaleX(0.900);-webkit-text-stroke:0.2px #c8c8c8;">4</div>
<div class="t" style="left:443.20px;top:75.77px;font-size:7.72px;color:#c8c8c8;font-weight:normal;transform:scaleX(0.900);-webkit-text-stroke:0.2px #c8c8c8;">5</div>
<div class="t" style="left:611.30px;top:75.77px;font-size:7.72px;color:#c8c8c8;font-weight:normal;transform:scaleX(0.900);-webkit-text-stroke:0.2px #c8c8c8;">8</div>
<div class="t" style="left:21.20px;top:140.97px;font-size:7.72px;color:#c8c8c8;font-weight:normal;transform:scaleX(0.900);-webkit-text-stroke:0.2px #c8c8c8;">0</div>
<div class="t" style="left:21.20px;top:212.47px;font-size:7.72px;color:#c8c8c8;font-weight:normal;transform:scaleX(0.900);-webkit-text-stroke:0.2px #c8c8c8;">1</div>
<div class="t" style="left:21.20px;top:284.47px;font-size:7.72px;color:#c8c8c8;font-weight:normal;transform:scaleX(0.900);-webkit-text-stroke:0.2px #c8c8c8;">2</div>
<div class="t" style="left:21.20px;top:356.97px;font-size:7.72px;color:#c8c8c8;font-weight:normal;transform:scaleX(0.900);-webkit-text-stroke:0.2px #c8c8c8;">3</div>
<div class="t" style="left:26.50px;top:481.04px;font-size:8.89px;color:#dcdcdc;font-weight:normal;transform:scaleX(0.680);-webkit-text-stroke:0.2px #dcdcdc;">66.67%</div>
<div class="t" style="left:77.00px;top:481.04px;font-size:8.89px;color:#dcdcdc;font-weight:normal;transform:scaleX(0.675);-webkit-text-stroke:0.2px #dcdcdc;">Doc: 6.18M/5.79M</div>
<div class="t" style="left:151.00px;top:479.34px;font-size:11.7px;color:#dcdcdc;font-weight:normal;transform:scaleX(0.900);-webkit-text-stroke:0.2px #dcdcdc;">›</div>
<div class="t" style="left:25.00px;top:499.59px;font-size:9.36px;color:#f0f0f0;font-weight:bold;transform:scaleX(0.675);-webkit-text-stroke:0.2px #f0f0f0;">Timeline</div>
<div class="t" style="left:294.00px;top:559.84px;font-size:8.89px;color:#ececec;font-weight:normal;transform:scaleX(0.688);-webkit-text-stroke:0.2px #ececec;">Create Video Timeline</div>
<div class="t" style="left:668.80px;top:186.07px;font-size:9.59px;color:#f2f2f2;font-weight:bold;transform:scaleX(0.630);-webkit-text-stroke:0.2px #f2f2f2;">Libraries</div>
<div class="t" style="left:704.00px;top:186.07px;font-size:9.59px;color:#dadada;font-weight:normal;transform:scaleX(0.702);-webkit-text-stroke:0.2px #dadada;">Adjustments</div>
<div class="t" style="left:751.00px;top:186.07px;font-size:9.59px;color:#dadada;font-weight:normal;transform:scaleX(0.652);-webkit-text-stroke:0.2px #dadada;">Styles</div>
<div class="t" style="left:673.00px;top:208.67px;font-size:9.59px;color:#e6e6e6;font-weight:normal;transform:scaleX(0.671);-webkit-text-stroke:0.2px #e6e6e6;">My Library</div>
<div class="t" style="left:676.50px;top:229.07px;font-size:9.59px;color:#767676;font-weight:normal;transform:scaleX(0.599);-webkit-text-stroke:0.2px #767676;">Search Adobe Stock</div>
<div class="t" style="left:668.00px;top:327.67px;font-size:9.59px;color:#f2f2f2;font-weight:bold;transform:scaleX(0.631);-webkit-text-stroke:0.2px #f2f2f2;">Layers</div>
<div class="t" style="left:697.00px;top:327.47px;font-size:9.59px;color:#dadada;font-weight:normal;transform:scaleX(0.680);-webkit-text-stroke:0.2px #dadada;">Channels</div>
<div class="t" style="left:734.00px;top:327.47px;font-size:9.59px;color:#dadada;font-weight:normal;transform:scaleX(0.674);-webkit-text-stroke:0.2px #dadada;">Paths</div>
<div class="t" style="left:678.50px;top:351.19px;font-size:9.36px;color:#a0a0a0;font-weight:normal;transform:scaleX(0.667);-webkit-text-stroke:0.2px #a0a0a0;">Kind</div>
<div class="t" style="left:670.00px;top:370.19px;font-size:9.36px;color:#8a8a8a;font-weight:normal;transform:scaleX(0.646);-webkit-text-stroke:0.2px #8a8a8a;">Normal</div>
<div class="t" style="left:742.50px;top:370.19px;font-size:9.36px;color:#8a8a8a;font-weight:normal;transform:scaleX(0.641);-webkit-text-stroke:0.2px #8a8a8a;">Opacity:</div>
<div class="t" style="left:769.50px;top:370.19px;font-size:9.36px;color:#6a6a6a;font-weight:normal;transform:scaleX(0.564);-webkit-text-stroke:0.2px #6a6a6a;">100%</div>
<div class="t" style="left:667.00px;top:389.99px;font-size:9.36px;color:#9a9a9a;font-weight:normal;transform:scaleX(0.626);-webkit-text-stroke:0.2px #9a9a9a;">Lock:</div>
<div class="t" style="left:756.00px;top:389.99px;font-size:9.36px;color:#8a8a8a;font-weight:normal;transform:scaleX(0.583);-webkit-text-stroke:0.2px #8a8a8a;">Fill:</div>
<div class="t" style="left:769.50px;top:389.99px;font-size:9.36px;color:#6a6a6a;font-weight:normal;transform:scaleX(0.564);-webkit-text-stroke:0.2px #6a6a6a;">100%</div>
<div class="t" style="left:705.00px;top:412.07px;font-size:9.59px;color:#ececec;font-weight:normal;transform:scaleX(0.636);-webkit-text-stroke:0.2px #ececec;">Background</div>
<div class="t" style="left:668.50px;top:494.57px;font-size:9.59px;color:#f2f2f2;font-weight:bold;transform:scaleX(0.651);-webkit-text-stroke:0.2px #f2f2f2;">History</div>
<div class="t" style="left:700.00px;top:494.37px;font-size:9.59px;color:#dadada;font-weight:normal;transform:scaleX(0.684);-webkit-text-stroke:0.2px #dadada;">Actions</div>
<div class="t" style="left:698.00px;top:516.07px;font-size:9.59px;color:#ececec;font-weight:normal;transform:scaleX(0.671);-webkit-text-stroke:0.2px #ececec;">Untitled-1</div>
<div class="t" style="left:696.00px;top:536.47px;font-size:9.59px;color:#ececec;font-weight:normal;transform:scaleX(0.652);-webkit-text-stroke:0.2px #ececec;">New</div>
<div class="t" style="left:696.00px;top:553.47px;font-size:9.59px;color:#ececec;font-weight:normal;transform:scaleX(0.624);-webkit-text-stroke:0.2px #ececec;">New Symmetry Path</div>
<div class="t" style="left:696.00px;top:569.67px;font-size:9.59px;color:#ececec;font-weight:normal;transform:scaleX(0.632);-webkit-text-stroke:0.2px #ececec;">Brush Tool</div>
<!-- top-right logo -->
<div class="a" style="left:603px;top:52px;width:197px;height:42px;background:linear-gradient(90deg,#fdfdfd 0%,#f2f2f2 25%,#e2e2e3 50%,#d6d6d7 75%,#cdcecf 100%)"></div>
<svg width="800" height="600" viewBox="0 0 800 600">
<g fill="#6b6b6b">
<path d="M619.3 60.8 L624.4 57.6 L624.4 77.2 Q624.4 83.8 617.8 83.8 L612.8 83.8 Q606 83.8 606 77 L606 71.2 L611.1 68.2 L611.1 76.6 Q611.1 78.9 613.4 78.9 L617 78.9 Q619.3 78.9 619.3 76.6 Z"/>
<path d="M627.2 60.8 L632.4 57.6 L632.4 83.8 L629.5 83.8 Q627.2 83.8 627.2 81.5 Z"/>
<path d="M657 68.9 L642.2 68.9 Q635 68.9 635 76.3 Q635 83.7 642.2 83.7 L667.8 83.7 L671.8 78.2 L642.6 78.2 Q640.4 78.2 640.4 76.3 Q640.4 74.4 642.6 74.4 L653.2 74.4 Z"/>
<path d="M677.2 68.9 L681.4 68.9 Q688.6 68.9 688.6 76.3 Q688.6 83.7 681.4 83.7 L669.6 83.7 L673.6 78.2 L681 78.2 Q683.2 78.2 683.2 76.3 Q683.2 74.4 681 74.4 L673.4 74.4 Z"/>
<path d="M691.8 61 L697.8 58.4 L697.8 76 L702.6 76 L702.6 71.6 L708.6 69.4 L708.6 76 L750 76 L750 66.6 L756.2 64.2 L756.2 83.2 L694.8 83.2 Q691.8 83.2 691.8 80.2 Z"/>
<path d="M744.8 64.6 Q745.6 59.6 750.6 59 L763 58.2 L759.2 62.8 L751 63.2 Q748.4 63.4 747.6 65.2 Z"/>
<circle cx="696.6" cy="88" r="2.5"/>
<circle cx="703.6" cy="88" r="2.5"/>
</g>
<g fill="none" stroke-width="5" stroke-linecap="round">
<path d="M775.3 69.4 L784.2 60.2" stroke="#f7a21b"/><path d="M766 60.2 L775.3 69.4" stroke="#fdc90a"/>
<path d="M775.3 78.4 L784.2 69" stroke="#1c8fd6"/><path d="M766 69 L775.3 78.4" stroke="#20a3e3"/>
<path d="M775.3 87.6 L784.2 78" stroke="#c8141c"/><path d="M766.2 78 L775.3 87.6" stroke="#e5141c"/>
</g>
</svg>
<!-- bottom-left watermark banner -->
<div class="a" style="left:4px;top:417px;width:269px;height:41px;border-radius:0 22px 22px 0/0 20px 20px 0;opacity:.56;background:linear-gradient(90deg,#f2f2f2 0px,#e8e8e8 100px,#b4b4b4 132px,#868686 162px,#6a6a6a 195px,#646464 235px,#606060 269px)"></div>
<svg width="800" height="600" viewBox="0 0 800 600">
<g fill="none" stroke-width="4.8" stroke-linecap="round">
<path d="M251.5 433.5 L260.5 425.5" stroke="#f7a21b"/><path d="M242.5 425.5 L251.5 433.5" stroke="#fdc90a"/>
<path d="M251.5 442.5 L260.5 434.5" stroke="#1c8fd6"/><path d="M242.5 434.5 L251.5 442.5" stroke="#20a3e3"/>
<path d="M251.5 451.5 L260.5 443.5" stroke="#c8141c"/><path d="M242.5 443.5 L251.5 451.5" stroke="#e5141c"/>
</g>
</svg>
<svg width="800" height="600"><path fill="#4f4f4f" fill-rule="evenodd" d="M48.3 433.1 47.4 434.6 49.6 435.9 51.0 437.2 51.7 438.4 51.7 439.6 51.0 440.6 49.6 441.1 46.7 441.2 45.3 441.0 45.3 442.7 48.7 442.9 51.3 442.4 52.6 441.5 53.4 440.0 53.4 438.1 52.5 436.3 50.9 434.7ZM9.9 433.1 9.1 434.6 11.3 435.9 12.7 437.2 13.4 438.4 13.4 439.6 12.7 440.6 11.3 441.1 8.4 441.2 7.0 441.0 7.0 442.7 10.4 442.9 13.0 442.4 14.3 441.5 15.1 440.0 15.1 438.1 14.2 436.3 12.6 434.7ZM35.7 430.9 34.4 432.3 35.8 433.6 37.1 432.2ZM40.8 428.8 40.8 442.9 42.5 442.9 42.5 428.8ZM30.5 428.8 28.8 428.8 28.8 439.5 28.5 440.4 28.0 440.9 27.1 441.2 24.9 441.2 24.2 438.0 23.6 436.9 22.7 436.0 21.3 435.5 20.0 435.6 19.1 436.0 18.2 436.9 17.4 439.0 17.4 440.6 17.8 441.6 18.5 442.3 19.3 442.7 20.4 442.9 22.9 442.9 23.0 443.2 22.4 444.5 21.4 445.4 19.7 446.4 17.5 446.9 18.0 448.4 20.5 447.8 22.5 446.6 23.9 444.9 24.7 442.9 28.0 442.8 28.7 442.5 29.7 441.4 30.4 442.2 31.6 442.8 35.2 442.9 36.2 442.6 37.4 441.4 38.0 439.6 38.0 437.7 37.7 435.7 35.9 436.1 36.2 437.5 36.4 439.4 36.0 440.5 35.5 441.0 34.8 441.2 32.3 441.2 31.4 440.9 30.8 440.1 30.5 438.8ZM20.0 437.4 20.5 437.2 21.5 437.3 22.5 438.1 23.0 439.7 23.0 441.2 20.0 441.1 19.1 440.5 19.0 439.0 19.4 437.9Z"/><path fill="#4f4f4f" fill-rule="evenodd" d="M109.2 444.7 108.1 446.1 109.3 447.3 110.5 446.0ZM79.5 435.3 78.1 434.4 76.9 434.1 75.9 434.1 74.3 434.8 73.2 436.3 72.9 437.3 72.9 438.8 73.3 440.0 73.9 441.0 73.8 441.2 66.2 441.2 66.3 442.0 66.6 442.9 69.2 443.1 69.7 443.8 69.6 444.7 69.0 445.4 68.0 446.1 66.5 446.5 63.8 446.4 63.1 446.1 62.2 445.2 61.6 444.1 61.4 443.0 61.4 441.5 61.8 439.3 60.5 438.8 60.0 441.1 60.0 443.4 60.4 445.0 61.3 446.7 62.2 447.5 63.3 448.0 64.2 448.2 66.6 448.2 68.9 447.5 69.9 446.7 70.7 445.8 71.1 444.3 71.0 442.9 73.4 442.9 75.8 442.6 79.9 441.4 79.9 439.7 75.9 440.8 74.8 439.7 74.3 438.2 74.6 437.0 75.3 436.2 76.2 435.8 76.9 435.8 77.7 436.0 78.9 436.7ZM100.3 432.0 99.2 433.2 100.3 434.5 100.4 434.5 101.6 433.2 100.4 432.0ZM97.4 432.0 96.2 433.2 97.4 434.5 98.6 433.2ZM117.2 428.8 117.2 442.9 118.6 442.9 118.6 428.8ZM82.4 428.8 82.5 440.1 83.2 441.9 84.2 442.7 85.1 442.9 87.0 442.8 87.9 442.3 88.7 441.3 90.2 442.7 91.3 443.1 93.0 443.0 93.6 442.7 94.4 441.8 95.0 442.5 96.0 442.9 98.2 442.9 99.5 442.5 100.6 441.3 101.3 442.3 102.2 442.8 105.6 442.9 107.9 442.4 113.0 439.6 114.9 439.0 114.9 437.3 113.7 437.2 111.9 436.4 108.8 434.8 107.5 434.6 106.6 434.8 105.7 435.5 104.8 436.6 104.5 437.3 105.8 437.9 107.0 436.5 107.9 436.3 112.2 438.2 112.1 438.4 108.9 440.1 107.0 440.9 105.3 441.2 102.9 441.2 102.1 440.9 101.5 440.0 101.2 436.7 99.8 437.0 99.9 439.4 99.6 440.2 99.0 440.9 98.6 441.1 96.2 441.2 95.8 441.0 95.1 440.2 94.4 437.6 93.3 436.2 92.3 435.7 90.8 435.7 90.0 436.1 89.1 437.1 87.9 439.6 87.1 440.8 86.2 441.2 84.9 441.1 84.1 440.4 83.8 439.4 83.8 428.8ZM91.1 437.4 91.8 437.3 92.4 437.5 93.0 438.2 93.3 438.9 93.3 440.6 92.6 441.4 91.9 441.5 91.2 441.3 90.1 440.6 89.5 439.8 90.1 438.4Z"/><path fill="#4f4f4f" fill-rule="evenodd" d="M147.5 444.7 146.3 446.1 147.6 447.3 148.8 446.0ZM163.2 432.1 161.9 433.4 163.2 434.6 164.4 433.4ZM159.8 432.1 158.6 433.4 159.8 434.6 161.0 433.4ZM161.4 429.5 160.3 430.8 161.5 432.0 162.7 430.7ZM126.0 437.9 126.0 439.2 126.2 439.8 127.1 440.9 128.3 441.4 130.0 441.4 131.0 441.0 132.0 440.2 132.5 441.5 133.1 442.3 134.6 442.9 139.7 442.8 141.2 442.3 142.5 441.1 143.5 442.3 145.0 442.9 147.8 442.8 149.0 442.3 149.9 441.3 150.7 442.4 152.0 442.9 154.8 442.8 156.0 442.2 156.6 441.4 157.9 442.7 159.9 442.9 161.1 442.4 162.0 441.3 163.0 442.5 164.0 442.9 165.1 442.9 166.2 442.5 166.8 441.8 167.2 441.1 167.6 439.3 167.4 436.4 167.2 435.8 165.7 436.2 166.1 439.3 165.9 440.2 165.3 441.0 164.3 441.2 163.7 441.0 163.3 440.6 162.9 439.6 162.7 437.1 161.2 437.2 161.2 439.7 161.0 440.4 160.2 441.1 159.0 441.2 158.3 440.9 157.6 439.8 157.3 437.1 155.9 437.2 155.9 439.7 155.7 440.2 155.1 440.9 154.0 441.2 152.4 441.2 151.6 441.0 150.9 440.2 150.6 439.4 150.5 436.7 149.0 437.0 149.1 439.1 148.9 439.9 148.3 440.8 147.2 441.2 145.3 441.2 144.6 441.0 143.6 440.0 142.5 437.6 141.8 436.5 139.9 434.7 137.5 432.9 143.7 430.3 143.8 428.6 136.6 431.6 135.9 432.4 135.9 433.2 136.3 434.0 139.3 436.3 141.0 438.2 141.2 438.8 141.2 439.9 140.5 440.8 138.7 441.2 134.9 441.2 134.0 440.8 133.4 439.6 132.5 433.0 131.0 433.4 131.1 433.7 130.9 433.9 129.4 434.4 127.7 435.4 126.7 436.3ZM131.3 435.4 131.7 437.2 131.7 438.1 131.4 438.9 130.8 439.4 129.9 439.8 128.6 439.8 128.1 439.6 127.5 438.7 127.6 437.8 128.0 437.2 128.9 436.4Z"/><path fill="#e8e8e8" fill-rule="evenodd" d="M190.9 445.3 189.7 446.7 191.0 448.1 192.1 446.8 192.1 446.6ZM187.9 445.3 187.7 445.3 186.5 446.6 187.8 448.1 189.0 446.7ZM179.4 435.5 178.2 437.0 179.5 438.4 180.8 436.9ZM235.9 438.6 235.5 436.1 234.0 436.5 234.3 438.5 234.3 440.1 234.0 441.0 233.5 441.5 229.0 441.5 228.2 440.8 228.1 440.3 229.0 439.8 230.2 439.5 230.2 437.8 229.2 437.7 227.4 437.0 223.7 435.2 222.1 435.1 220.4 436.1 219.4 437.3 219.3 437.9 220.7 438.5 222.0 437.1 222.9 436.9 227.1 438.6 227.2 438.8 223.3 440.8 220.7 441.6 217.4 441.6 216.8 441.3 216.4 440.8 216.1 440.0 215.9 437.2 214.4 437.6 214.5 440.2 214.1 441.2 213.5 441.6 212.4 441.5 211.9 441.0 211.5 439.7 211.4 437.5 209.8 437.7 209.8 440.3 209.6 441.1 209.1 441.5 207.6 441.6 206.7 440.8 206.4 439.6 206.3 437.5 204.7 437.7 204.8 439.9 204.6 440.6 204.2 441.2 203.4 441.6 201.1 441.6 200.3 441.2 199.9 440.3 199.7 437.2 198.1 437.3 198.0 440.4 197.5 441.2 196.7 441.6 194.2 441.6 193.5 441.3 193.0 440.6 192.8 440.0 192.6 437.2 191.1 437.5 191.1 440.0 190.9 440.7 190.3 441.4 189.7 441.6 186.3 441.6 185.8 441.4 185.2 440.7 184.3 437.9 182.8 438.5 183.6 441.7 183.6 443.9 183.2 445.2 182.3 446.2 181.4 446.8 179.0 447.0 178.0 446.8 177.1 446.4 176.2 445.4 175.7 444.1 175.6 442.1 176.3 439.0 174.8 438.4 174.1 441.5 174.1 444.1 174.9 446.5 176.5 448.2 178.5 448.8 180.8 448.8 182.9 448.1 184.2 446.9 185.0 445.0 185.3 443.0 186.3 443.5 189.5 443.5 191.1 442.9 192.0 442.0 192.8 443.0 193.7 443.4 196.5 443.5 198.1 442.9 199.0 442.0 199.7 442.9 200.6 443.4 203.3 443.5 204.3 443.2 205.6 442.0 205.9 442.5 206.7 443.3 208.7 443.5 209.6 443.2 210.7 442.0 211.6 443.1 212.2 443.4 213.7 443.5 214.5 443.2 215.5 442.0 216.1 443.0 217.0 443.4 220.4 443.5 223.6 442.6 226.8 441.0 227.4 442.4 228.2 443.1 229.8 443.5 233.3 443.5 234.4 443.1 235.4 441.9 235.8 440.5ZM198.7 432.4 197.5 433.7 198.8 435.1 200.1 433.7ZM195.7 432.4 195.5 432.4 194.3 433.6 195.6 435.1 196.9 433.7ZM233.8 431.3 232.5 432.8 233.9 434.2 235.1 432.7ZM223.7 430.4 222.4 431.8 223.8 433.2 225.1 431.7Z"/></svg>
<!-- symmetry menu -->
<div class="a" style="left:434px;top:30px;width:13px;height:17px;background:#383838"></div>
<svg width="800" height="600"><path d="M440.5 36.5 C439.8 34.5 437.5 33 436.2 33.4 C435.3 33.8 436 36.8 437.8 38.6 C436.4 39.8 436.8 42.6 438 43.2 C439.2 43.8 440.2 42 440.5 40.2 C440.8 42 441.8 43.8 443 43.2 C444.2 42.6 444.6 39.8 443.2 38.6 C445 36.8 445.7 33.8 444.8 33.4 C443.5 33 441.2 34.5 440.5 36.5 Z M440.5 35.5 V42.5" fill="none" stroke="#d6d6d6" stroke-width="0.9"/></svg>
<div class="a" style="left:445px;top:43px;width:116px;height:202px;border-radius:4px;background:rgba(0,0,0,.55)"></div>
<div class="a" style="left:446px;top:44px;width:114px;height:200px;border-radius:3px;background:#c4c4c4;border:1px solid #d6d6d6;overflow:hidden">
<div class="a" style="left:-40px;top:88px;width:95px;height:150px;background:#ffffff;filter:blur(16px);opacity:.95"></div>
</div>
<div class="a" style="left:447px;top:77.5px;width:112px;height:1px;background:#a9a9a9"></div>
<div class="a" style="left:447px;top:196px;width:112px;height:1px;background:#a9a9a9"></div>
<svg width="800" height="600">
<g fill="none" stroke="#222" stroke-width="0.9">
<rect x="460.5" y="84.5" width="7" height="8.5" stroke="#8a8a8a"/><path d="M464 85 V92.5"/>
<rect x="460.5" y="98" width="7" height="8.5" stroke="#8a8a8a"/><path d="M461 102.2 H467"/>
<rect x="460.5" y="112" width="7" height="8.5" stroke="#8a8a8a"/><path d="M461 116.2 H467 M464 112.5 V120"/>
<rect x="460.5" y="125.5" width="7" height="8.5" stroke="#8a8a8a"/><path d="M461 126 L467 133.5"/>
<rect x="460.5" y="139" width="7" height="8.5" stroke="#a0a0a0"/><path d="M462.5 140 C466.5 140 466.5 143 464 143.5 C461.5 144 461.5 146.5 465.5 146.8" stroke-width="1"/>
<rect x="460.5" y="152.7" width="7" height="8.5" stroke="#a0a0a0"/><circle cx="464" cy="157" r="2.5" stroke-width="1.1"/>
<rect x="460.5" y="166.5" width="7" height="8.5" stroke="#a0a0a0"/><path d="M466.8 170.6 A3 3 0 1 1 463.8 167.6 M465.3 170.8 A1.5 1.5 0 1 1 463.8 169.3" stroke-width="0.9"/>
<rect x="460.5" y="180" width="7" height="8.5" stroke="#8a8a8a"/><path d="M462.8 180.5 V188 M465.2 180.5 V188"/>
</g>
</svg>

<div class="t" style="left:471.30px;top:47.77px;font-size:9.2px;color:#161616;font-weight:normal;transform:scaleX(0.875);-webkit-text-stroke:0px #161616;-webkit-text-stroke:0.25px #161616;">Symmetry Off</div>
<div class="t" style="left:471.30px;top:62.07px;font-size:9.2px;color:#8f8f8f;font-weight:normal;transform:scaleX(0.875);-webkit-text-stroke:0px #8f8f8f;-webkit-text-stroke:0.25px #8f8f8f;">Last Used Symmetry</div>
<div class="t" style="left:471.30px;top:84.37px;font-size:9.2px;color:#161616;font-weight:normal;transform:scaleX(0.875);-webkit-text-stroke:0px #161616;-webkit-text-stroke:0.25px #161616;">New Vertical</div>
<div class="t" style="left:471.30px;top:97.97px;font-size:9.2px;color:#161616;font-weight:normal;transform:scaleX(0.875);-webkit-text-stroke:0px #161616;-webkit-text-stroke:0.25px #161616;">New Horizontal</div>
<div class="t" style="left:471.30px;top:111.97px;font-size:9.2px;color:#161616;font-weight:normal;transform:scaleX(0.875);-webkit-text-stroke:0px #161616;-webkit-text-stroke:0.25px #161616;">New Dual Axis</div>
<div class="t" style="left:471.30px;top:125.57px;font-size:9.2px;color:#161616;font-weight:normal;transform:scaleX(0.875);-webkit-text-stroke:0px #161616;-webkit-text-stroke:0.25px #161616;">New Diagonal</div>
<div class="t" style="left:471.30px;top:138.97px;font-size:9.2px;color:#161616;font-weight:normal;transform:scaleX(0.875);-webkit-text-stroke:0px #161616;-webkit-text-stroke:0.25px #161616;">New Wavy</div>
<div class="t" style="left:471.30px;top:152.57px;font-size:9.2px;color:#161616;font-weight:normal;transform:scaleX(0.875);-webkit-text-stroke:0px #161616;-webkit-text-stroke:0.25px #161616;">New Circle</div>
<div class="t" style="left:471.30px;top:166.17px;font-size:9.2px;color:#161616;font-weight:normal;transform:scaleX(0.875);-webkit-text-stroke:0px #161616;-webkit-text-stroke:0.25px #161616;">New Spiral</div>
<div class="t" style="left:471.30px;top:179.77px;font-size:9.2px;color:#161616;font-weight:normal;transform:scaleX(0.875);-webkit-text-stroke:0px #161616;-webkit-text-stroke:0.25px #161616;">New Parallel Lines</div>
<div class="t" style="left:471.30px;top:201.87px;font-size:9.2px;color:#8f8f8f;font-weight:normal;transform:scaleX(0.875);-webkit-text-stroke:0px #8f8f8f;-webkit-text-stroke:0.25px #8f8f8f;">Selected Path</div>
<div class="t" style="left:471.30px;top:216.17px;font-size:9.2px;color:#161616;font-weight:normal;transform:scaleX(0.875);-webkit-text-stroke:0px #161616;-webkit-text-stroke:0.25px #161616;">Transform Symmetry</div>
<div class="t" style="left:471.30px;top:229.57px;font-size:9.2px;color:#161616;font-weight:normal;transform:scaleX(0.875);-webkit-text-stroke:0px #161616;-webkit-text-stroke:0.25px #161616;">Hide Symmetry</div>
</body></html>
